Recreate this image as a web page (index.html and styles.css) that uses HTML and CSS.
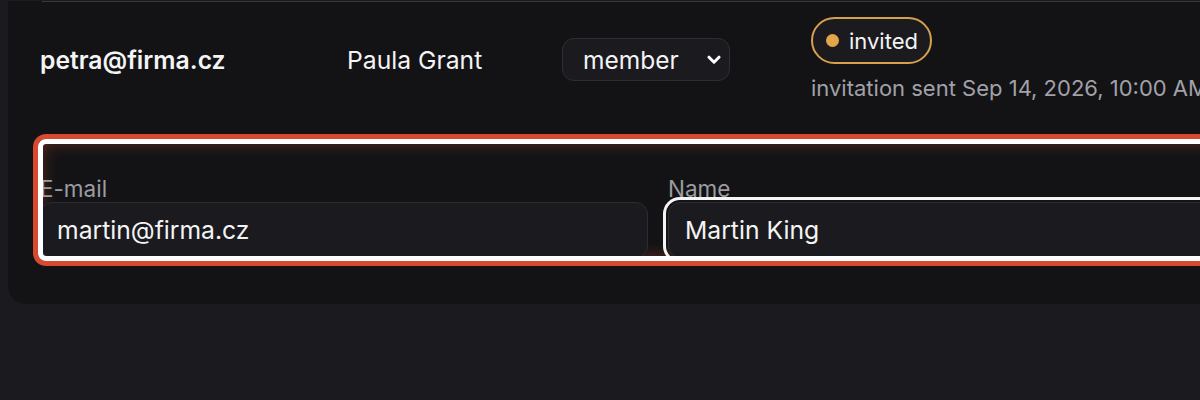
FILE: index.html
```html
<!DOCTYPE html>
<html lang="en">
<head>
<meta charset="utf-8">
<title>Members</title>
<link rel="stylesheet" href="styles.css">
</head>
<body>
<div class="page">
  <section class="card">
    <div class="member-row">
      <div class="cell email">petra@firma.cz</div>
      <div class="cell name">Paula Grant</div>
      <div class="cell role">
        <div class="select">
          <span>member</span>
          <svg class="chev" width="14" height="10" viewBox="0 0 14 10"><path d="M2 2.2 L7 7.2 L12 2.2" fill="none" stroke="#ffffff" stroke-width="3" stroke-linecap="round" stroke-linejoin="round"/></svg>
        </div>
      </div>
      <div class="cell status">
        <span class="badge"><span class="dot"></span>invited</span>
        <span class="sent">invitation sent Sep 14, 2026, 10:00 AM</span>
      </div>
    </div>
    <form class="edit">
      <label class="field">
        <span class="label">E-mail</span>
        <input class="input" type="text" value="martin@firma.cz">
      </label>
      <label class="field">
        <span class="label">Name</span>
        <input class="input focused" type="text" value="Martin King">
      </label>
    </form>
  </section>
</div>
</body>
</html>
```

FILE: styles.css
```css
html, body {
  margin: 0;
  padding: 0;
  background: #1b1b1f;
  overflow: hidden;
  width: 1200px;
  height: 400px;
}

body {
  font-family: Inter, "Noto Sans", sans-serif;
  color: #f4f4f5;
}

.page {
  padding-left: 8px;
}

.card {
  width: 1400px;
  background: #131316;
  border-bottom-left-radius: 18px;
  padding: 0 0 43px 32px;
}

.member-row {
  display: grid;
  grid-template-columns: 307px 215px 249px 1fr;
  align-items: center;
  border-top: 1px solid #38383e;
  margin-top: 1px;
  margin-left: 2px;
  padding: 15px 0 15px 0;
}

.cell {
  font-size: 24.7px;
  line-height: 30px;
}

.email {
  font-weight: 600;
  margin-left: -2px;
}

.name {
  margin-left: -2px;
}

.role {
  margin-left: -2px;
}

.select {
  width: 168px;
  height: 43px;
  box-sizing: border-box;
  border: 1px solid #2e2e34;
  border-radius: 12px;
  background: #1b1b1f;
  display: flex;
  align-items: center;
  justify-content: space-between;
  padding: 0 8px 0 20px;
  font-size: 24.5px;
}

.chev {
  display: block;
}

.status {
  display: flex;
  flex-direction: column;
  align-items: flex-start;
  gap: 10px;
  margin-left: -2px;
}

.badge {
  display: inline-flex;
  align-items: center;
  gap: 10px;
  height: 47px;
  box-sizing: border-box;
  border: 2px solid #d6a04c;
  border-radius: 24px;
  background: #1b1b1f;
  padding: 0 12px 0 13px;
  font-size: 22px;
}

.dot {
  width: 13px;
  height: 13px;
  border-radius: 50%;
  background: #e2a547;
}

.sent {
  font-size: 22px;
  line-height: 28px;
  color: #a1a1a8;
  white-space: nowrap;
}

.edit {
  margin: 22px 0 0 -2px;
  padding: 36px 0 3px 2px;
  height: 122px;
  box-sizing: border-box;
  display: grid;
  grid-template-columns: 608px 608px;
  gap: 20px;
  border-radius: 8px;
  background: #131316;
  box-shadow: 0 0 0 5px #d84a2f, inset 0 0 16px 4px rgba(216, 74, 47, 0.4);
  outline: 5px solid #ffffff;
  outline-offset: -5px;
  overflow: hidden;
}

.field {
  display: flex;
  flex-direction: column;
}

.label {
  font-size: 22.5px;
  line-height: 27px;
  color: #9b9ba1;
}

.input {
  height: 56px;
  box-sizing: border-box;
  border: 1px solid #2c2c32;
  border-radius: 12px;
  background: #1b1b1f;
  color: #f4f4f5;
  font-family: Inter, "Noto Sans", sans-serif;
  font-size: 24.7px;
  padding: 0 16px;
  margin: 0;
}

.focused {
  outline: 3px solid #f4f4f5;
  outline-offset: 2px;
}
```
